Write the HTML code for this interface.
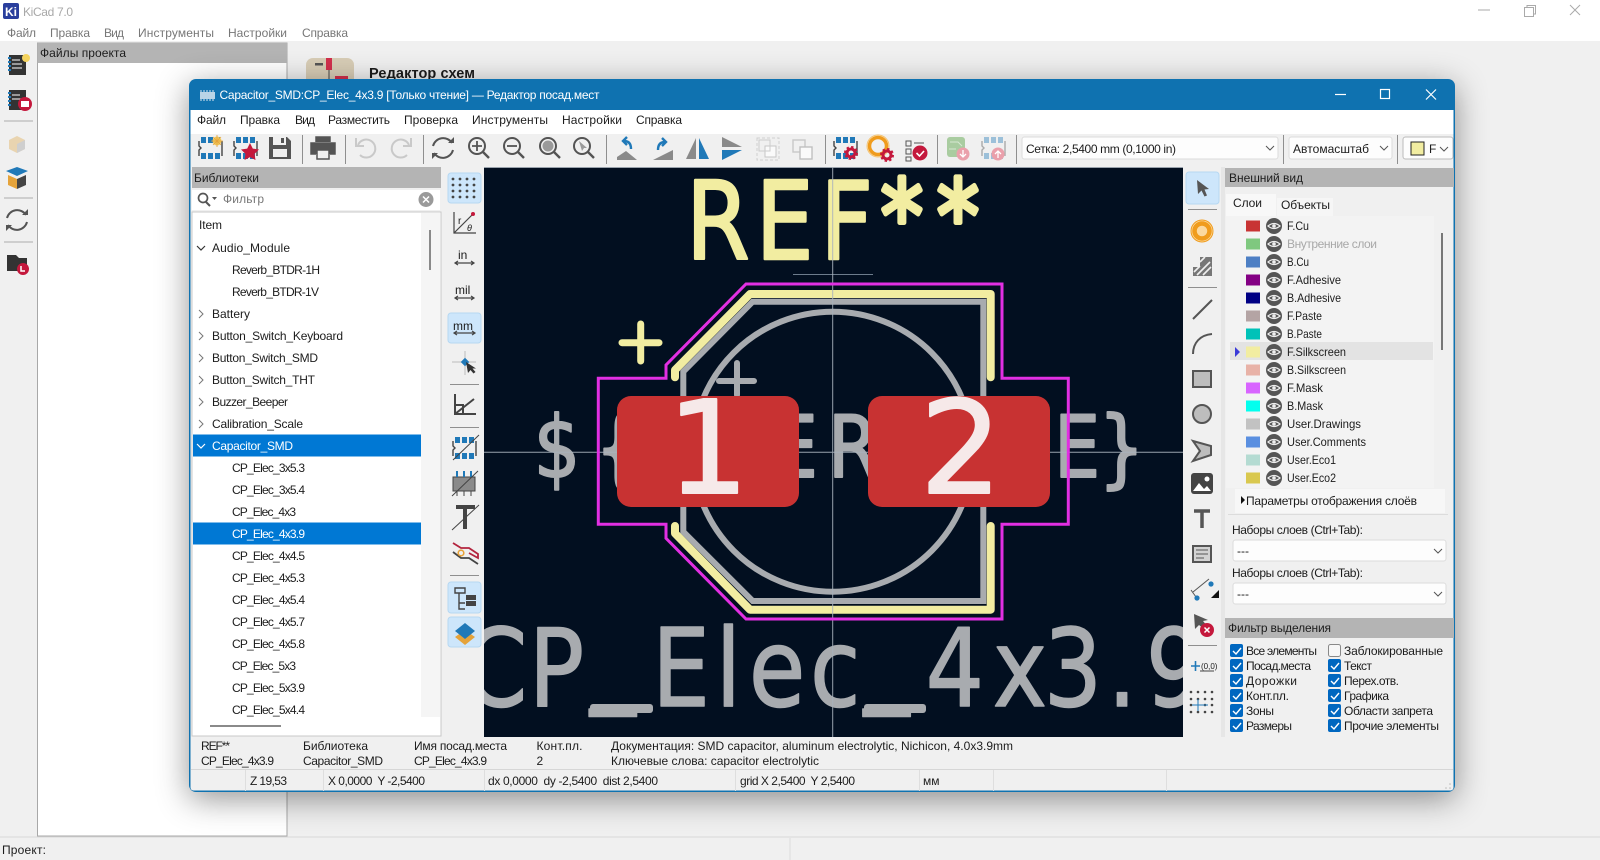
<!DOCTYPE html>
<html lang="ru"><head><meta charset="utf-8"><title>KiCad 7.0</title>
<style>
html,body{margin:0;padding:0;width:1600px;height:860px;overflow:hidden;background:#f0f0f0}
svg{display:block}
text{font-family:"Liberation Sans","Noto Sans CJK JP",sans-serif;font-size:12px;fill:#1c1c1c;white-space:pre}
.big{font-family:"DejaVu Sans",sans-serif;stroke-linejoin:round}
.m{fill:#777}
.w{fill:#fff}
.g{fill:#a8a8a8}
.i{fill:none;stroke:#545454;stroke-width:2}
.l{fill:none;stroke:#c9c9c9;stroke-width:2}
.sep{stroke:#8f8f8f;stroke-width:1}
</style></head><body>
<svg width="1600" height="860" viewBox="0 0 1600 860" xmlns="http://www.w3.org/2000/svg">
<defs>
<g id="eye"><circle r="8" fill="#555"/><path d="M-6 0Q0-5 6 0Q0 5-6 0Z" fill="none" stroke="#eee" stroke-width="1.2"/><circle r="1.8" fill="#eee"/></g>
<g id="cb"><rect width="13" height="13" rx="2" fill="#0067c0"/><path d="M3 7l3 3 5-6" fill="none" stroke="#fff" stroke-width="1.4"/></g>
<g id="chip"><g fill="#2079b8"><rect x="3" y="1" width="5" height="6"/><rect x="10" y="1" width="5" height="6"/><rect x="17" y="1" width="5" height="6"/><rect x="3" y="17" width="5" height="6"/><rect x="10" y="17" width="5" height="6"/><rect x="17" y="17" width="5" height="6"/></g><path d="M1 5v5l2 2-2 2v6M24 5v15" fill="none" stroke="#444" stroke-width="1.4"/></g>
<g id="mag"><circle cx="-2" cy="-2" r="8" fill="none" stroke="#545454" stroke-width="2"/><path d="M4 4l6 6" stroke="#545454" stroke-width="2.4"/></g>
<g id="gear"><circle r="4" fill="none" stroke="#c4183c" stroke-width="3"/><circle r="6" fill="none" stroke="#c4183c" stroke-width="2" stroke-dasharray="2.4 2.3"/></g>
<clipPath id="cv"><rect x="484" y="167" width="699" height="570"/></clipPath>
<clipPath id="top"><rect x="290" y="40" width="200" height="39"/></clipPath>
</defs>

<!-- main window -->
<rect width="1600" height="860" fill="#f0f0f0"/>
<rect width="1600" height="41" fill="#fff"/>
<rect x="3" y="3" width="16" height="16" rx="2" fill="#2a3f9d"/>
<text x="5" y="16" class="w" style="font-weight:bold;font-size:12px" textLength="12">Ki</text>
<text x="23" y="16" class="g" textLength="50">KiCad 7.0</text>
<path d="M1478 10h12" stroke="#aaa"/><path d="M1524.500 7.500h9v9h-9z M1527 7.500v-2h8.500v8.500h-2" fill="none" stroke="#aaa"/><path d="M1570 5l10 10M1580 5l-10 10" stroke="#aaa"/>
<text x="7" y="37" class="m" textLength="29">Файл</text><text x="50" y="37" class="m" textLength="40">Правка</text><text x="104" y="37" class="m" textLength="20">Вид</text><text x="138" y="37" class="m" textLength="76">Инструменты</text><text x="228" y="37" class="m" textLength="59">Настройки</text><text x="302" y="37" class="m" textLength="46">Справка</text>

<!-- main left toolbar -->
<g transform="translate(8,53)"><path d="M1 2h17v20H1z" fill="#333"/><path d="M4 7h8M4 11h10M4 15h10" stroke="#fff"/><path d="M0 5h3M0 9h3M0 13h3M0 17h3" stroke="#2079b8" stroke-width="2"/><circle cx="18" cy="5" r="4" fill="#f4d35e"/></g>
<g transform="translate(8,88)"><path d="M1 2h17v20H1z" fill="#333"/><path d="M4 7h8M4 11h10" stroke="#fff"/><path d="M0 5h3M0 9h3M0 13h3M0 17h3" stroke="#2079b8" stroke-width="2"/><circle cx="17" cy="16" r="7" fill="#c4183c"/><rect x="13" y="13" width="8" height="6" fill="#fff"/></g>
<path d="M4 121h29M4 198h29M4 242h29" class="sep" opacity=".7"/>
<path d="M9 140l8-4 8 4v9l-8 4-8-4z" fill="#e9d4b0"/><path d="M17 144l8-4v9l-8 4z" fill="#cfcfcf"/>
<path d="M6 171l11-4 11 4-11 5z" fill="#2079b8"/><path d="M8 175l9 4v10l-9-4z" fill="#e5a33a"/><path d="M17 179l9-4v10l-9 4z" fill="#444"/>
<g transform="translate(17,220)"><path d="M-10-2A10.500 10.500 0 0 1 9-5M10 2A10.500 10.500 0 0 1-9 5" class="i"/><path d="M5-5h6v-6zM-5 5h-6v6z" fill="#545454"/></g>
<path d="M7 255h9l3 3h8v13H7z" fill="#333"/><circle cx="23" cy="269" r="6" fill="#c4183c"/><path d="M21 266v5h4" stroke="#fff" stroke-width="1.500" fill="none"/>

<!-- project panel -->
<rect x="37.500" y="43" width="249.500" height="793" fill="#fff" stroke="#a8a8a8"/>
<rect x="37.500" y="43" width="249.500" height="20" fill="#b4b4b4"/>
<text x="40" y="57" textLength="86">Файлы проекта</text>
<g clip-path="url(#top)"><rect x="306" y="58" width="48" height="48" rx="7" fill="#d8cdb6"/><rect x="326" y="58" width="6" height="12" fill="#d22f4c"/><rect x="315" y="63" width="8" height="2.500" fill="#555"/><path d="M329 70v10" stroke="#444"/><rect x="335" y="76" width="13" height="5" fill="#d22f4c"/></g>
<text x="369" y="78" style="font-size:14.500px;font-weight:bold" fill="#111" textLength="106">Редактор схем</text>
<path d="M0 837H1600" stroke="#d9d9d9"/><path d="M790 838V860" stroke="#ddd"/>
<text x="2" y="854" textLength="44">Проект:</text>

<!-- footprint editor window -->
<rect x="189" y="79" width="1266" height="713" rx="7" fill="#0f72b0" style="filter:drop-shadow(0 7px 16px rgba(0,0,0,.42))"/>
<rect x="190.500" y="110" width="1263" height="680.500" rx="3" fill="#f0f0f0"/>
<rect x="190.500" y="110" width="1263" height="24" fill="#fff"/>
<g transform="translate(199,90)" fill="#b9d4e6"><rect x="1" y="2" width="15" height="7"/><path d="M2 0v11M5 0v11M8 0v11M11 0v11M14 0v11" stroke="#b9d4e6" stroke-width="1.200"/></g>
<text x="219.500" y="99" class="w" textLength="380">Capacitor_SMD:CP_Elec_4x3.9 [Только чтение] — Редактор посад.мест</text>
<path d="M1335 94.500h11" stroke="#fff" stroke-width="1.200"/><rect x="1380.500" y="89.500" width="9" height="9" fill="none" stroke="#fff" stroke-width="1.200"/><path d="M1426 89.500l10 10M1436 89.500l-10 10" stroke="#fff" stroke-width="1.200"/>

<text x="197" y="124" textLength="29">Файл</text><text x="240" y="124" textLength="40">Правка</text><text x="295" y="124" textLength="20">Вид</text><text x="328" y="124" textLength="62">Разместить</text><text x="404" y="124" textLength="54">Проверка</text><text x="472" y="124" textLength="76">Инструменты</text><text x="562" y="124" textLength="60">Настройки</text><text x="636" y="124" textLength="46">Справка</text>

<!-- top toolbar -->
<use href="#chip" x="198" y="136"/><circle cx="217" cy="141" r="4.500" fill="#f0c75a"/><path d="M217 135v12M211 141h12M213 137l8 8M221 137l-8 8" stroke="#e5a33a" stroke-width=".8"/>
<use href="#chip" x="233" y="136"/><path d="M250 143l2.800 5.600 6.200.9-4.500 4.400 1 6.100-5.500-2.900-5.500 2.900 1-6.100-4.500-4.400 6.200-.9z" fill="#c4183c"/>
<path d="M269 137h18l4 4v18h-22z" fill="#545454"/><rect x="273" y="137" width="13" height="8" fill="#f0f0f0"/><rect x="281" y="138" width="3" height="5" fill="#545454"/><rect x="273" y="149" width="14" height="8" fill="#f0f0f0"/>
<path d="M316 142v-5h14v5M316 154h-5v-11h24v11h-5" fill="#545454" stroke="#545454" stroke-width="1.500"/><rect x="317" y="150" width="12" height="9" fill="#f0f0f0" stroke="#545454" stroke-width="1.500"/>
<path d="M302.500 135v29M345.500 135v29M423.500 135v29M606.500 135v29M825.500 135v29M937.500 135v29M1016.500 135v29M1283.500 135v29M1397.500 135v29" class="sep"/>
<path d="M358 145a9 9 0 1 1 2 10" class="l"/><path d="M356 138v8h8" class="l"/>
<path d="M409 145a9 9 0 1 0-2 10" class="l"/><path d="M411 138v8h-8" class="l"/>
<g transform="translate(443,148)"><path d="M-10-2A10.500 10.500 0 0 1 9-5M10 2A10.500 10.500 0 0 1-9 5" class="i"/><path d="M5-5h6v-6zM-5 5h-6v6z" fill="#545454"/></g>
<use href="#mag" x="479" y="148"/><path d="M472 146h10M477 141v10" stroke="#545454" stroke-width="1.800"/>
<use href="#mag" x="514" y="148"/><path d="M507 146h10" stroke="#545454" stroke-width="1.800"/>
<use href="#mag" x="550" y="148"/><circle cx="548" cy="146" r="5.500" fill="#9a9a9a"/>
<use href="#mag" x="584" y="148"/><path d="M579 141l3 10 2-3 3 0z" fill="#9a9a9a"/>
<path d="M617 157l9-6 11 9h-20z" fill="#8a8a8a"/><path d="M631 149c0-6-3-8-7-8m3-4l-4 4 4 4" fill="none" stroke="#2079b8" stroke-width="2.400"/>
<path d="M653 160l20-10v10z" fill="#8a8a8a"/><path d="M658 150c0-6 3-8 7-8m-3-4l4 4-4 4" fill="none" stroke="#2079b8" stroke-width="2.400"/>
<path d="M696 138v21h-10z" fill="#8a8a8a"/><path d="M699 138v21h10z" fill="#2079b8"/>
<path d="M722 137l20 10h-20z" fill="#8a8a8a"/><path d="M722 150h20l-20 10z" fill="#2079b8"/>
<rect x="757" y="138" width="22" height="22" fill="none" stroke="#cfcfcf" stroke-dasharray="3 2"/><rect x="765" y="146" width="11" height="11" fill="#fafafa" stroke="#c6c6c6"/><rect x="759" y="140" width="11" height="11" fill="none" stroke="#ccc"/>
<rect x="793" y="140" width="12" height="12" fill="none" stroke="#c9c9c9" stroke-width="1.400"/><rect x="800" y="147" width="12" height="12" fill="#fafafa" stroke="#c0c0c0" stroke-width="1.400"/>
<use href="#chip" x="833" y="136"/><use href="#gear" x="851" y="153"/>
<circle cx="878" cy="146" r="8.500" fill="none" stroke="#f09c1d" stroke-width="3.500"/><circle cx="878" cy="146" r="11" fill="none" stroke="#f6c36f"/><use href="#gear" x="887" y="155"/>
<path d="M906 141h5v5h-5zM906 149h5v5h-5zM906 157h5v4h-5z" fill="none" stroke="#555"/><path d="M914 143h10" stroke="#555"/><circle cx="920" cy="153" r="7.500" fill="#c4183c"/><path d="M916.500 153l3 3 4.500-5" stroke="#fff" stroke-width="1.600" fill="none"/>
<rect x="947" y="137" width="18" height="20" rx="3" fill="#a9cca0"/><path d="M950 142h8l4 4M949 149h7" stroke="#d7e8d2" fill="none"/><circle cx="963" cy="154" r="6.500" fill="#eaa0ab"/><path d="M963 150v7M960 154l3 3 3-3" stroke="#fff" stroke-width="1.300" fill="none"/>
<g opacity=".4"><use href="#chip" x="981" y="136"/></g><circle cx="998" cy="154" r="6.500" fill="#eaa0ab"/><path d="M998 158v-7M995 154l3-3 3 3" stroke="#fff" stroke-width="1.300" fill="none"/>

<rect x="1022" y="137" width="256" height="22" rx="2.500" fill="#fdfdfd" stroke="#dcdcdc"/><text x="1026" y="153" textLength="150">Сетка: 2,5400 mm (0,1000 in)</text><path d="M1266 146l4 4 4-4" fill="none" stroke="#555"/>
<rect x="1289" y="137" width="103" height="22" rx="2.500" fill="#fdfdfd" stroke="#dcdcdc"/><text x="1293" y="153" textLength="76">Автомасштаб</text><path d="M1380 146l4 4 4-4" fill="none" stroke="#555"/>
<rect x="1403" y="137" width="50" height="22" rx="2.500" fill="#fdfdfd" stroke="#bbb"/><rect x="1411" y="142" width="13" height="13" fill="#f2eda1" stroke="#222"/><text x="1429" y="153">F</text><path d="M1440 147l4 4 4-4" fill="none" stroke="#555"/>

<!-- libraries panel -->
<rect x="192" y="167" width="249" height="21" fill="#b4b4b4"/>
<text x="194" y="182" textLength="65">Библиотеки</text>
<rect x="192" y="190" width="248" height="20" fill="#fff"/>
<circle cx="203" cy="198" r="4.500" fill="none" stroke="#555" stroke-width="1.700"/><path d="M206 202l4 4" stroke="#555" stroke-width="2"/><path d="M212 197h5l-2.500 3z" fill="#555"/>
<text x="223" y="203" fill="#555" class="m" textLength="41">Фильтр</text>
<circle cx="426" cy="199.500" r="7.500" fill="#9a9a9a"/><path d="M423 196.500l6 6M429 196.500l-6 6" stroke="#fff" stroke-width="1.500"/>
<rect x="192" y="212" width="249" height="524" fill="#fff" stroke="#c8c8c8"/>
<rect x="421" y="213" width="19" height="504" fill="#f5f5f5"/>
<rect x="429" y="230" width="2" height="40" fill="#8a8a8a"/>
<rect x="210" y="725" width="71" height="2" fill="#8a8a8a"/>
<rect x="193" y="434.500" width="228" height="22" fill="#0078d4"/>
<rect x="193" y="522.500" width="228" height="22" fill="#0078d4"/>
<text x="199" y="229" textLength="23">Item</text>
<path d="M197 246l4 4 4-4" fill="none" stroke="#333" stroke-width="1.200"/><text x="212" y="252" textLength="78">Audio_Module</text>
<text x="232" y="274" textLength="88">Reverb_BTDR-1H</text>
<text x="232" y="296" textLength="87">Reverb_BTDR-1V</text>
<path d="M199 310l4 4-4 4M199 332l4 4-4 4M199 354l4 4-4 4M199 376l4 4-4 4M199 398l4 4-4 4M199 420l4 4-4 4" fill="none" stroke="#777"/>
<text x="212" y="318" textLength="38">Battery</text>
<text x="212" y="340" textLength="131">Button_Switch_Keyboard</text>
<text x="212" y="362" textLength="106">Button_Switch_SMD</text>
<text x="212" y="384" textLength="103">Button_Switch_THT</text>
<text x="212" y="406" textLength="76">Buzzer_Beeper</text>
<text x="212" y="428" textLength="91">Calibration_Scale</text>
<path d="M197 444l4 4 4-4" fill="none" stroke="#fff" stroke-width="1.200"/><text x="212" y="450" class="w" textLength="81">Capacitor_SMD</text>
<text x="232" y="472" textLength="73">CP_Elec_3x5.3</text>
<text x="232" y="494" textLength="73">CP_Elec_3x5.4</text>
<text x="232" y="516" textLength="64">CP_Elec_4x3</text>
<text x="232" y="538" class="w" textLength="73">CP_Elec_4x3.9</text>
<text x="232" y="560" textLength="73">CP_Elec_4x4.5</text>
<text x="232" y="582" textLength="73">CP_Elec_4x5.3</text>
<text x="232" y="604" textLength="73">CP_Elec_4x5.4</text>
<text x="232" y="626" textLength="73">CP_Elec_4x5.7</text>
<text x="232" y="648" textLength="73">CP_Elec_4x5.8</text>
<text x="232" y="670" textLength="64">CP_Elec_5x3</text>
<text x="232" y="692" textLength="73">CP_Elec_5x3.9</text>
<text x="232" y="714" textLength="73">CP_Elec_5x4.4</text>

<!-- left canvas toolbar -->
<rect x="448" y="173" width="33" height="30" rx="3" fill="#cde6fb" stroke="#b6d8f2"/>
<g fill="#444"><circle cx="453" cy="179" r="1.400"/><circle cx="460" cy="179" r="1.400"/><circle cx="467" cy="179" r="1.400"/><circle cx="474" cy="179" r="1.400"/><circle cx="453" cy="185" r="1.400"/><circle cx="460" cy="185" r="1.400"/><circle cx="467" cy="185" r="1.400"/><circle cx="474" cy="185" r="1.400"/><circle cx="453" cy="191" r="1.400"/><circle cx="460" cy="191" r="1.400"/><circle cx="467" cy="191" r="1.400"/><circle cx="474" cy="191" r="1.400"/><circle cx="453" cy="197" r="1.400"/><circle cx="460" cy="197" r="1.400"/><circle cx="467" cy="197" r="1.400"/><circle cx="474" cy="197" r="1.400"/></g>
<path d="M454 212v21h22M454 233l19-19" fill="none" stroke="#444" stroke-width="1.200"/><circle cx="473" cy="214" r="2" fill="#c4183c"/><text x="458" y="224" style="font-size:10px" fill="#444">r</text><text x="467" y="231" style="font-size:9px;font-style:italic" fill="#444">θ</text>
<text x="458" y="259" style="font-size:12px" fill="#444">in</text><path d="M455 263h19M458 261l-3 2 3 2M471 261l3 2-3 2" fill="none" stroke="#444" stroke-width="1.200"/>
<text x="455" y="294" style="font-size:12px" fill="#444">mil</text><path d="M455 298h19M458 296l-3 2 3 2M471 296l3 2-3 2" fill="none" stroke="#444" stroke-width="1.200"/>
<rect x="448" y="313" width="33" height="30" rx="3" fill="#cde6fb" stroke="#b6d8f2"/>
<text x="453" y="330" style="font-size:12px" fill="#444">mm</text><path d="M454 333h21M457 331l-3 2 3 2M472 331l3 2-3 2" fill="none" stroke="#444" stroke-width="1.200"/>
<path d="M452 362h24M465 351v24" stroke="#bbb"/><rect x="462" y="359" width="6" height="6" transform="rotate(45 465 362)" fill="#2079b8"/><path d="M466 362l2 11 2.500-3 3 3.500 2-1.500-3-3.500h3.500z" fill="#333"/>
<path d="M455 394v20h21M455 414l19-15M455 405h8v9" fill="none" stroke="#444" stroke-width="2"/>
<path d="M450 384.500h29M450 427.500h29M450 575.500h29" class="sep"/>
<use href="#chip" x="452" y="436"/><path d="M453 460l26-25" stroke="#444"/>
<path d="M453 477h22v14h-22z" fill="#8a8a8a" stroke="#444"/><path d="M457 471v6M464 471v6M471 471v6" stroke="#2079b8" stroke-width="2"/><path d="M457 491v5M464 491v5M471 491v5" stroke="#444"/><path d="M452 496l26-25" stroke="#444"/>
<path d="M456 507h19M465 507v22" stroke="#444" stroke-width="4"/><path d="M452 530l27-25" stroke="#444"/>
<path d="M453 543l8 5h8l9 6v4l-9-5" fill="none" stroke="#b3243e" stroke-width="1.800"/><path d="M453 552l8 6h8l9 6" fill="none" stroke="#444" stroke-width="1.800"/><circle cx="461" cy="553" r="2.800" fill="none" stroke="#e8a33a" stroke-width="1.600"/>
<rect x="448" y="582" width="33" height="31" rx="3" fill="#cde6fb" stroke="#b6d8f2"/>
<path d="M455 588h10v5h-10zM459 593v10h6M459 603v6h6" fill="none" stroke="#444" stroke-width="1.400"/><rect x="466" y="595" width="10" height="5" fill="#444"/><rect x="466" y="601" width="10" height="5" fill="#444"/>
<rect x="448" y="617" width="33" height="30" rx="3" fill="#cde6fb" stroke="#b6d8f2"/>
<path d="M465 624l10 7-10 8-10-8z" fill="#e5a33a" transform="translate(0,6)"/><path d="M465 623l10 8-10 8-10-8z" fill="#2079b8"/>

<!-- canvas -->
<rect x="484" y="167" width="699" height="570" fill="#020f20"/>
<rect x="484" y="167" width="699" height="1" fill="#9aa3ad"/>
<g clip-path="url(#cv)">
<path d="M793 274.500h80" stroke="#6d7c8c"/>
<text class="big" transform="scale(.85 1)" x="807 889 965" y="259" style="font-size:108px;fill:#f2eda1;stroke:#f2eda1;stroke-width:2.500">REF</text>
<text class="big" transform="scale(.85 1)" x="1036 1102" y="251" style="font-size:100px;fill:#f2eda1;stroke:#f2eda1;stroke-width:5">**</text>
<text class="big" transform="scale(.85 1)" x="628 700 753 812 859 908 974 1060 1120 1170 1240 1292" y="477" style="font-size:86px;fill:#a8abaf;stroke:#a8abaf;stroke-width:2">${REFERENCE}</text>
<text class="big" transform="scale(.85 1)" x="545 622 694 767 842 881 953 1016 1089 1168 1228 1303 1348" y="706 706 691 706 706 706 706 691 706 706 706 706 706" style="font-size:108px;fill:#a8abaf;stroke:#a8abaf;stroke-width:1.500">CP_Elec_4x3.9</text>
<rect x="590" y="704" width="63" height="9" rx="3" fill="#a8abaf"/><rect x="864" y="704" width="62" height="9" rx="3" fill="#a8abaf"/>
<circle cx="832.700" cy="451.700" r="140" fill="none" stroke="#a8abaf" stroke-width="6"/>
<path d="M719 381h35M737 363v32" stroke="#a8abaf" stroke-width="6" stroke-linecap="round"/>
<path d="M683.300 396V371.700L752.700 301.700H983.300V396M683.300 507V531.700L752.700 601H983.300V507" fill="none" stroke="#a8abaf" stroke-width="6"/>
<path d="M675 377.300V370L750 294H990.700V377.300M675 526V533.300L750 609.700H990.700V526" fill="none" stroke="#f2eda1" stroke-width="8" stroke-linecap="round" stroke-linejoin="round"/>
<path d="M622 342.700h37M640.700 324v37" stroke="#f2eda1" stroke-width="7" stroke-linecap="round"/>
<path d="M832.700 167V737M484 452.300H1183" stroke="#aab3bd" stroke-width="1" opacity=".9"/>
<path d="M598.300 378.300H666V365L746 284H1002V378.300H1068.300V524.300H1002V619H746L666 538.300V524.300H598.300Z" fill="none" stroke="#e22fe2" stroke-width="3"/>
<rect x="617" y="396" width="182" height="111" rx="14" fill="#c83232"/>
<rect x="868" y="396" width="182" height="111" rx="14" fill="#c83232"/>
<text class="big" x="708" y="493" text-anchor="middle" style="font-size:129px;fill:#f6e9e9;stroke:#f6e9e9;stroke-width:2">1</text>
<text class="big" x="961" y="493" text-anchor="middle" style="font-size:129px;fill:#f6e9e9;stroke:#f6e9e9;stroke-width:2">2</text>
</g>

<!-- right toolbar -->
<rect x="1186" y="172" width="33" height="32" rx="3" fill="#cde6fb" stroke="#b6d8f2"/>
<path d="M1197 180l1 14 3.500-3.500 3 6 2.500-1-2.500-6 4.500-.5z" fill="#555"/>
<path d="M1188 209.500h29M1188 287.500h29M1188 645.500h29" class="sep"/>
<circle cx="1202" cy="231" r="11" fill="#fbd9a0" stroke="#f09c1d" stroke-width="1"/><circle cx="1202" cy="231" r="7.500" fill="none" stroke="#f09c1d" stroke-width="4.500"/>
<path d="M1193 276v-9h7v-10h12v19h-19z" fill="#777"/><path d="M1194 272l6-6M1197 275l13-13M1203 275l8-8M1200 262l5-5" stroke="#f0f0f0" stroke-width="1.600"/>
<path d="M1193 319l19-19" stroke="#555" stroke-width="2"/>
<path d="M1193 354c0-11 7-19 19-20" fill="none" stroke="#555" stroke-width="2"/>
<rect x="1193" y="371" width="18" height="16" fill="#bdbdbd" stroke="#555" stroke-width="2"/>
<circle cx="1202" cy="414" r="9" fill="#bdbdbd" stroke="#555" stroke-width="2"/>
<path d="M1193 441l18 5v9l-18 6 7-10z" fill="#bdbdbd" stroke="#555" stroke-width="2"/>
<rect x="1191" y="473" width="22" height="21" rx="3" fill="#444"/><circle cx="1207" cy="479" r="2.500" fill="#fff"/><path d="M1193 491l6-8 5 6 3-3 4 5z" fill="#fff"/>
<path d="M1194 511h16M1202 511v17" stroke="#555" stroke-width="3.500"/>
<rect x="1193" y="546" width="18" height="16" fill="#d2d2d2" stroke="#555" stroke-width="2"/><path d="M1196 550h12M1196 554h12M1196 558h8" stroke="#555"/>
<path d="M1193 592l16-13" stroke="#555"/><circle cx="1211" cy="584" r="2.600" fill="#2079b8"/><path d="M1191 590l5 7" stroke="#555"/><circle cx="1197" cy="598" r="2.600" fill="#2079b8"/><path d="M1219 598h-8l8-8z" fill="#111"/>
<path d="M1194 614l1 15 4-4 5 4 4-2-5-6 5-1z" fill="#555"/><circle cx="1207" cy="630" r="7" fill="#c4183c"/><path d="M1204.500 627.500l5 5M1209.500 627.500l-5 5" stroke="#fff" stroke-width="1.500"/>
<path d="M1191 666h9M1195.500 661v10" stroke="#2079b8" stroke-width="1.600"/><text x="1201" y="669" style="font-size:8px" fill="#444">(0,0)</text><path d="M1200 671h14" stroke="#444"/>
<g fill="#444"><circle cx="1191" cy="692" r="1.300"/><circle cx="1198" cy="692" r="1.300"/><circle cx="1205" cy="692" r="1.300"/><circle cx="1212" cy="692" r="1.300"/><circle cx="1191" cy="699" r="1.300"/><circle cx="1198" cy="699" r="1.300"/><circle cx="1205" cy="699" r="1.300"/><circle cx="1212" cy="699" r="1.300"/><circle cx="1191" cy="705" r="1.300"/><circle cx="1205" cy="705" r="1.300"/><circle cx="1212" cy="705" r="1.300"/><circle cx="1191" cy="712" r="1.300"/><circle cx="1198" cy="712" r="1.300"/><circle cx="1205" cy="712" r="1.300"/><circle cx="1212" cy="712" r="1.300"/></g><path d="M1192 705h16M1198 699v12" stroke="#2079b8"/>

<!-- appearance panel -->
<rect x="1221" y="167" width="4" height="570" fill="#e6e6e6"/>
<rect x="1225" y="168" width="229" height="19" fill="#b4b4b4"/>
<text x="1229" y="182" textLength="74">Внешний вид</text>
<rect x="1226" y="194" width="50" height="22" fill="#f8f8f8"/><rect x="1277" y="198" width="56" height="18" fill="#f6f6f6"/>
<text x="1233" y="207" textLength="29">Слои</text><text x="1281" y="209" textLength="49">Объекты</text>
<rect x="1226" y="216" width="208" height="272" fill="#f3f3f3"/>
<rect x="1441" y="233" width="2" height="117" fill="#777"/>
<rect x="1230" y="342" width="203" height="18" fill="#e3e3e3"/>
<path d="M1235 347l5 5-5 5z" fill="#3a3ad8"/>
<rect x="1246" y="220.500" width="14" height="11" fill="#c83434"/><rect x="1246" y="238.500" width="14" height="11" fill="#7fc87f"/><rect x="1246" y="256.500" width="14" height="11" fill="#4d7fc4"/><rect x="1246" y="274.500" width="14" height="11" fill="#840084"/><rect x="1246" y="292.500" width="14" height="11" fill="#000084"/><rect x="1246" y="310.500" width="14" height="11" fill="#b4a4a4"/><rect x="1246" y="328.500" width="14" height="11" fill="#00c2b8"/><rect x="1246" y="346.500" width="14" height="11" fill="#f2eda1"/><rect x="1246" y="364.500" width="14" height="11" fill="#e8b2a7"/><rect x="1246" y="382.500" width="14" height="11" fill="#d864ff"/><rect x="1246" y="400.500" width="14" height="11" fill="#02ffee"/><rect x="1246" y="418.500" width="14" height="11" fill="#c2c2c2"/><rect x="1246" y="436.500" width="14" height="11" fill="#5a8fe0"/><rect x="1246" y="454.500" width="14" height="11" fill="#b4dbd2"/><rect x="1246" y="472.500" width="14" height="11" fill="#d9c84f"/>
<use href="#eye" x="1274" y="226"/><use href="#eye" x="1274" y="244"/><use href="#eye" x="1274" y="262"/><use href="#eye" x="1274" y="280"/><use href="#eye" x="1274" y="298"/><use href="#eye" x="1274" y="316"/><use href="#eye" x="1274" y="334"/><use href="#eye" x="1274" y="352"/><use href="#eye" x="1274" y="370"/><use href="#eye" x="1274" y="388"/><use href="#eye" x="1274" y="406"/><use href="#eye" x="1274" y="424"/><use href="#eye" x="1274" y="442"/><use href="#eye" x="1274" y="460"/><use href="#eye" x="1274" y="478"/>
<text x="1287" y="230" lengthAdjust="spacingAndGlyphs" textLength="22">F.Cu</text><text x="1287" y="248" class="g" textLength="90">Внутренние слои</text><text x="1287" y="266" lengthAdjust="spacingAndGlyphs" textLength="22">B.Cu</text><text x="1287" y="284" lengthAdjust="spacingAndGlyphs" textLength="54">F.Adhesive</text><text x="1287" y="302" lengthAdjust="spacingAndGlyphs" textLength="54">B.Adhesive</text><text x="1287" y="320" lengthAdjust="spacingAndGlyphs" textLength="35">F.Paste</text><text x="1287" y="338" lengthAdjust="spacingAndGlyphs" textLength="35">B.Paste</text><text x="1287" y="356" lengthAdjust="spacingAndGlyphs" textLength="59">F.Silkscreen</text><text x="1287" y="374" lengthAdjust="spacingAndGlyphs" textLength="59">B.Silkscreen</text><text x="1287" y="392" lengthAdjust="spacingAndGlyphs" textLength="36">F.Mask</text><text x="1287" y="410" lengthAdjust="spacingAndGlyphs" textLength="36">B.Mask</text><text x="1287" y="428" lengthAdjust="spacingAndGlyphs" textLength="74">User.Drawings</text><text x="1287" y="446" lengthAdjust="spacingAndGlyphs" textLength="79">User.Comments</text><text x="1287" y="464" lengthAdjust="spacingAndGlyphs" textLength="49">User.Eco1</text><text x="1287" y="482" lengthAdjust="spacingAndGlyphs" textLength="49">User.Eco2</text>
<rect x="1235" y="489" width="210" height="24" fill="#f7f7f7"/>
<path d="M1241 496l4 4-4 4z" fill="#111"/><text x="1246" y="505" textLength="171">Параметры отображения слоёв</text>
<path d="M1228 514.500h220" stroke="#dcdcdc"/>
<text x="1232" y="534" textLength="131">Наборы слоев (Ctrl+Tab):</text>
<rect x="1233" y="540" width="213" height="21" rx="2.500" fill="#fdfdfd" stroke="#dcdcdc"/><text x="1237" y="555">---</text><path d="M1434 549l4 4 4-4" fill="none" stroke="#555"/>
<text x="1232" y="577" textLength="131">Наборы слоев (Ctrl+Tab):</text>
<rect x="1233" y="583" width="213" height="21" rx="2.500" fill="#fdfdfd" stroke="#dcdcdc"/><text x="1237" y="598">---</text><path d="M1434 592l4 4 4-4" fill="none" stroke="#555"/>
<rect x="1225" y="618" width="229" height="20" fill="#b4b4b4"/>
<text x="1228" y="632" textLength="103">Фильтр выделения</text>
<use href="#cb" x="1230" y="644"/><use href="#cb" x="1230" y="659"/><use href="#cb" x="1230" y="674"/><use href="#cb" x="1230" y="689"/><use href="#cb" x="1230" y="704"/><use href="#cb" x="1230" y="719"/>
<rect x="1328.500" y="644.500" width="12" height="12" rx="2" fill="#f6f6f6" stroke="#888"/><use href="#cb" x="1328" y="659"/><use href="#cb" x="1328" y="674"/><use href="#cb" x="1328" y="689"/><use href="#cb" x="1328" y="704"/><use href="#cb" x="1328" y="719"/>
<text x="1246" y="655" textLength="71">Все элементы</text><text x="1246" y="670" textLength="65">Посад.места</text><text x="1246" y="685" textLength="51">Дорожки</text><text x="1246" y="700" textLength="43">Конт.пл.</text><text x="1246" y="715" textLength="28">Зоны</text><text x="1246" y="730" textLength="46">Размеры</text>
<text x="1344" y="655" textLength="99">Заблокированные</text><text x="1344" y="670" textLength="28">Текст</text><text x="1344" y="685" textLength="55">Перех.отв.</text><text x="1344" y="700" textLength="45">Графика</text><text x="1344" y="715" textLength="89">Области запрета</text><text x="1344" y="730" textLength="95">Прочие элементы</text>

<!-- info + status -->
<text x="201" y="750" textLength="29">REF**</text><text x="201" y="765" textLength="73">CP_Elec_4x3.9</text>
<text x="303" y="750" textLength="65">Библиотека</text><text x="303" y="765" textLength="80">Capacitor_SMD</text>
<text x="414" y="750" textLength="93">Имя посад.места</text><text x="414" y="765" textLength="73">CP_Elec_4x3.9</text>
<text x="536.500" y="750" textLength="46">Конт.пл.</text><text x="536.500" y="765">2</text>
<text x="611" y="750" textLength="402">Документация: SMD capacitor, aluminum electrolytic, Nichicon, 4.0x3.9mm</text>
<text x="611" y="765" textLength="208">Ключевые слова: capacitor electrolytic</text>
<path d="M191 769.500H1453" stroke="#d6d6d6"/>
<path d="M245.500 770v21M323.500 770v21M484.500 770v21M735.500 770v21M919.500 770v21M993.500 770v21M1166.500 770v21" stroke="#dedede"/>
<text x="250" y="785" textLength="37">Z 19,53</text>
<text x="328" y="785" textLength="97">X 0,0000  Y -2,5400</text>
<text x="488" y="785" textLength="170">dx 0,0000  dy -2,5400  dist 2,5400</text>
<text x="740" y="785" textLength="115">grid X 2,5400  Y 2,5400</text>
<text x="923" y="785">мм</text>
<g fill="#bbb"><circle cx="1450" cy="788" r=".8"/><circle cx="1446" cy="788" r=".8"/><circle cx="1450" cy="784" r=".8"/></g>
</svg>
</body></html>
